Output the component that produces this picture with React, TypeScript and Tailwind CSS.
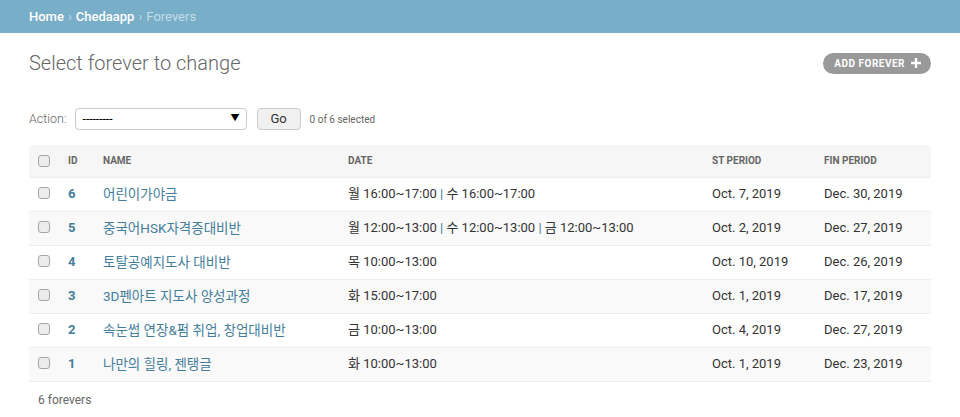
const rows = [
  { id: 6, name: '어린이가야금', date: ['월 16:00~17:00', '수 16:00~17:00'], st: 'Oct. 7, 2019', fin: 'Dec. 30, 2019' },
  { id: 5, name: '중국어HSK자격증대비반', date: ['월 12:00~13:00', '수 12:00~13:00', '금 12:00~13:00'], st: 'Oct. 2, 2019', fin: 'Dec. 27, 2019' },
  { id: 4, name: '토탈공예지도사 대비반', date: ['목 10:00~13:00'], st: 'Oct. 10, 2019', fin: 'Dec. 26, 2019' },
  { id: 3, name: '3D펜아트 지도사 양성과정', date: ['화 15:00~17:00'], st: 'Oct. 1, 2019', fin: 'Dec. 17, 2019' },
  { id: 2, name: '속눈썹 연장&펌 취업, 창업대비반', date: ['금 10:00~13:00'], st: 'Oct. 4, 2019', fin: 'Dec. 27, 2019' },
  { id: 1, name: '나만의 힐링, 젠탱글', date: ['화 10:00~13:00'], st: 'Oct. 1, 2019', fin: 'Dec. 23, 2019' },
];

function Box() {
  return <span className="block w-[12px] h-[12px] rounded-[3px] border border-[#a5a5a5] bg-[#ececec]" />;
}

export default function App() {
  return (
    <div className="min-h-[417px] bg-white text-[13px] text-[#333]" style={{ fontFamily: "Roboto, 'Noto Sans CJK KR', 'Liberation Sans', sans-serif" }}>
      {/* breadcrumbs */}
      <div className="h-[33px] bg-[#79aec8] px-[29px] flex items-center text-[13px] text-[#c4dce8]">
        <span className="text-white font-medium">Home</span>
        <span className="mx-[4px]">›</span>
        <span className="text-white font-medium">Chedaapp</span>
        <span className="mx-[4px]">›</span>
        <span>Forevers</span>
      </div>

      <div className="px-[29px]">
        <div className="flex items-center justify-between h-[60px]">
          <h1 className="text-[20px] font-light text-[#666]">Select forever to change</h1>
          <div className="h-[21px] pl-[11px] pr-[10px] rounded-full bg-[#999] flex items-center gap-[6px] text-white text-[10px] font-bold tracking-[0.5px] uppercase">
            ADD FOREVER
            <svg width="10" height="10" viewBox="0 0 10 10"><path d="M3.8 0h2.4v3.8H10v2.4H6.2V10H3.8V6.2H0V3.8h3.8z" fill="#fff" /></svg>
          </div>
        </div>

        <div className="flex items-center h-[22px] mt-[15px]">
          <span className="text-[12.5px] font-light text-[#666]">Action:</span>
          <div className="ml-[8px] w-[172px] h-[22px] border border-[#ccc] rounded-[4px] flex items-center justify-between pl-[7px] pr-[6px] text-[12px] text-black">
            <span>---------</span>
            <span className="text-[9px]">▼</span>
          </div>
          <div className="ml-[10px] w-[44px] h-[22px] border border-[#ccc] rounded-[4px] bg-[#f0f0f0] flex items-center justify-center text-[13px] text-[#333]">Go</div>
          <span className="ml-[9px] text-[10px] text-[#666]">0 of 6 selected</span>
        </div>

        <table className="w-full mt-[15px] border-collapse">
          <thead>
            <tr className="h-[32px] bg-[#f6f6f6] text-[10px] font-bold text-[#666] uppercase text-left">
              <th className="w-[31px] pl-[9px] align-middle"><Box /></th>
              <th className="w-[43px] pl-[8px] align-middle">ID</th>
              <th className="w-[245px] align-middle">NAME</th>
              <th className="w-[364px] align-middle">DATE</th>
              <th className="w-[112px] align-middle">ST PERIOD</th>
              <th className="align-middle">FIN PERIOD</th>
            </tr>
          </thead>
          <tbody>
            {rows.map((r, i) => (
              <tr key={r.id} className={`h-[34px] border-t border-[#eee] ${i % 2 === 1 ? 'bg-[#f9f9f9]' : 'bg-white'} ${i === rows.length - 1 ? 'border-b' : ''}`}>
                <td className="pl-[9px] align-middle"><div className="-mt-[3px]"><Box /></div></td>
                <td className="pl-[8px] font-bold text-[#447e9b] align-middle">{r.id}</td>
                <td className="text-[#447e9b] text-[13.5px] align-middle">{r.name}</td>
                <td className="align-middle">
                  {r.date.map((d, j) => (
                    <span key={j}>
                      {j > 0 && <span className="text-[#447e9b]"> | </span>}
                      {d}
                    </span>
                  ))}
                </td>
                <td className="align-middle">{r.st}</td>
                <td className="align-middle">{r.fin}</td>
              </tr>
            ))}
          </tbody>
        </table>

        <div className="pt-[9px] pl-[9px] text-[12px] text-[#666]">6 forevers</div>
      </div>
    </div>
  );
}
